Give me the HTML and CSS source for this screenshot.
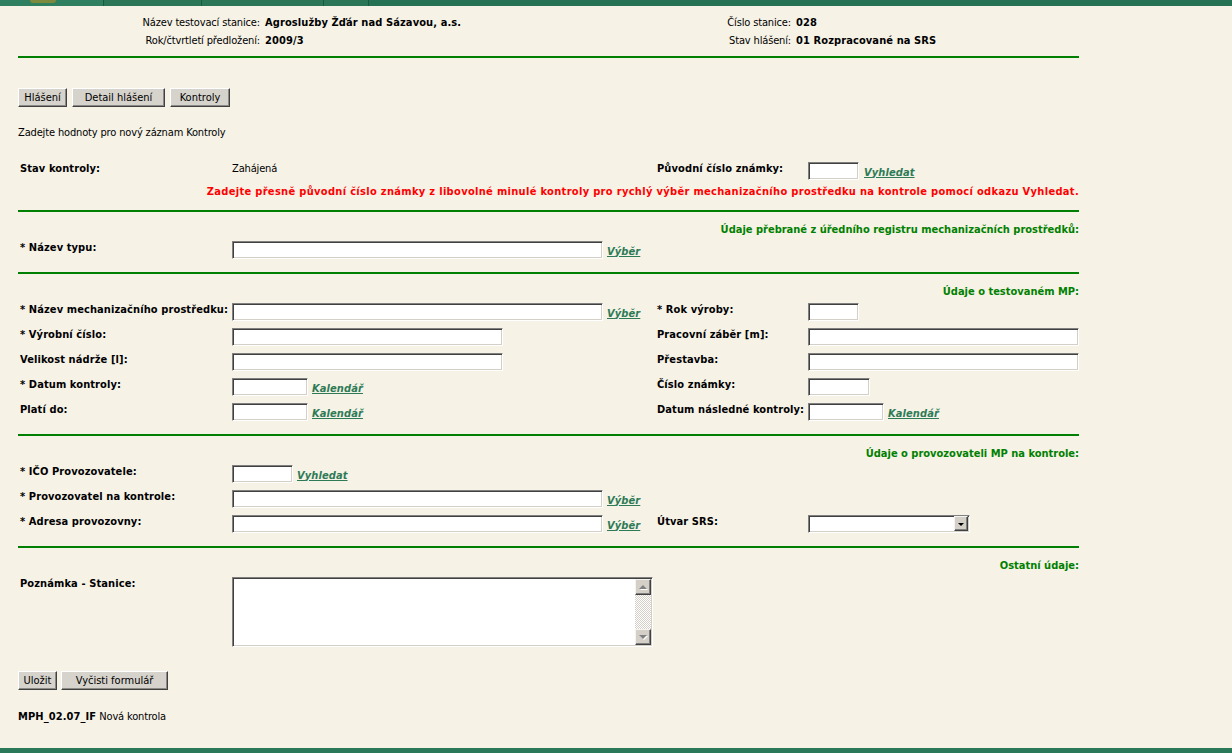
FILE: index.html
```html
<!DOCTYPE html>
<html lang="cs">
<head>
<meta charset="utf-8">
<title>Nová kontrola</title>
<link rel="stylesheet" href="styles.css">
</head>
<body>
<div class="topbar">
  <div class="tb-home"><span class="tb-logo"></span></div>
  <div class="tb-tab tb-w98"></div>
  <div class="tb-tab tb-w122"></div>
  <div class="tb-tab tb-w45"></div>
  <div class="tb-tab tb-rest"></div>
</div>

<div class="hdr-grid">
  <span class="hdr-label">Název testovací stanice:</span><b class="hdr-value">Agroslužby Žďár nad Sázavou, a.s.</b>
  <span class="hdr-label">Číslo stanice:</span><b class="hdr-value">028</b>
  <span class="hdr-label">Rok/čtvrtletí předložení:</span><b class="hdr-value">2009/3</b>
  <span class="hdr-label">Stav hlášení:</span><b class="hdr-value">01 Rozpracované na SRS</b>
</div>

<div class="main">
  <div class="rule rule-top"></div>

  <div class="tabs">
    <button class="btn w49">Hlášení</button>
    <button class="btn w93">Detail hlášení</button>
    <button class="btn w60">Kontroly</button>
  </div>

  <p class="intro">Zadejte hodnoty pro nový záznam Kontroly</p>

  <div class="status">
    <div class="row">
      <div class="lbl">Stav kontroly:</div>
      <div class="ctl">Zahájená</div>
      <div class="lbl">Původní číslo známky:</div>
      <div class="ctl gap5"><input class="inp w51" type="text"><a class="lnk" href="#">Vyhledat</a></div>
    </div>
    <div class="warn">Zadejte přesně původní číslo známky z libovolné minulé kontroly pro rychlý výběr mechanizačního prostředku na kontrole pomocí odkazu Vyhledat.</div>
  </div>
  <div class="rule"></div>

  <div class="sec">
    <div class="sec-title">Údaje přebrané z úředního registru mechanizačních prostředků:</div>
    <div class="rows">
      <div class="row">
        <div class="lbl">* Název typu:</div>
        <div class="ctl"><input class="inp w371" type="text"><a class="lnk" href="#">Výběr</a></div>
      </div>
    </div>
  </div>
  <div class="rule"></div>

  <div class="sec">
    <div class="sec-title">Údaje o testovaném MP:</div>
    <div class="rows">
      <div class="row">
        <div class="lbl">* Název mechanizačního prostředku:</div>
        <div class="ctl"><input class="inp w371" type="text"><a class="lnk" href="#">Výběr</a></div>
        <div class="lbl">* Rok výroby:</div>
        <div class="ctl"><input class="inp w51" type="text"></div>
      </div>
      <div class="row">
        <div class="lbl">* Výrobní číslo:</div>
        <div class="ctl"><input class="inp w271" type="text"></div>
        <div class="lbl">Pracovní záběr [m]:</div>
        <div class="ctl"><input class="inp w271" type="text"></div>
      </div>
      <div class="row">
        <div class="lbl">Velikost nádrže [l]:</div>
        <div class="ctl"><input class="inp w271" type="text"></div>
        <div class="lbl">Přestavba:</div>
        <div class="ctl"><input class="inp w271" type="text"></div>
      </div>
      <div class="row">
        <div class="lbl">* Datum kontroly:</div>
        <div class="ctl"><input class="inp w76" type="text"><a class="lnk" href="#">Kalendář</a></div>
        <div class="lbl">Číslo známky:</div>
        <div class="ctl"><input class="inp w62" type="text"></div>
      </div>
      <div class="row">
        <div class="lbl">Platí do:</div>
        <div class="ctl"><input class="inp w76" type="text"><a class="lnk" href="#">Kalendář</a></div>
        <div class="lbl">Datum následné kontroly:</div>
        <div class="ctl"><input class="inp w76" type="text"><a class="lnk" href="#">Kalendář</a></div>
      </div>
    </div>
  </div>
  <div class="rule"></div>

  <div class="sec">
    <div class="sec-title">Údaje o provozovateli MP na kontrole:</div>
    <div class="rows">
      <div class="row">
        <div class="lbl">* IČO Provozovatele:</div>
        <div class="ctl"><input class="inp w61" type="text"><a class="lnk" href="#">Vyhledat</a></div>
      </div>
      <div class="row">
        <div class="lbl">* Provozovatel na kontrole:</div>
        <div class="ctl"><input class="inp w371" type="text"><a class="lnk" href="#">Výběr</a></div>
      </div>
      <div class="row">
        <div class="lbl">* Adresa provozovny:</div>
        <div class="ctl"><input class="inp w371" type="text"><a class="lnk" href="#">Výběr</a></div>
        <div class="lbl">Útvar SRS:</div>
        <div class="ctl">
          <span class="select">
            <select class="select-field"><option></option></select>
            <span class="select-btn"><span class="tri-down"></span></span>
          </span>
        </div>
      </div>
    </div>
  </div>
  <div class="rule"></div>

  <div class="sec">
    <div class="sec-title">Ostatní údaje:</div>
    <div class="rows">
      <div class="row row-memo">
        <div class="lbl">Poznámka - Stanice:</div>
        <div class="ctl">
          <div class="memo">
            <textarea class="memo-text"></textarea>
            <div class="vscroll">
              <span class="sb-btn"><span class="tri-up-dis"></span></span>
              <span class="sb-track"></span>
              <span class="sb-btn"><span class="tri-down-dis"></span></span>
            </div>
          </div>
        </div>
      </div>
    </div>
  </div>

  <div class="actions">
    <button class="btn w39">Uložit</button>
    <button class="btn w107">Vyčisti formulář</button>
  </div>

  <p class="footer-id"><b>MPH_02.07_IF</b> Nová kontrola</p>
</div>

<div class="bottombar"></div>
</body>
</html>
```

FILE: styles.css
```css
* { box-sizing: border-box; }

html, body { margin: 0; padding: 0; }

body {
  width: 1232px;
  height: 753px;
  overflow: hidden;
  display: flex;
  flex-direction: column;
  background: #f6f2e6;
  color: #000;
  font-family: "DejaVu Sans Condensed", "DejaVu Sans", sans-serif;
  font-stretch: condensed;
  font-size: 11px;
  line-height: 13px;
  letter-spacing: -0.15px;
}

b, .lbl, .lnk, .hdr-value { letter-spacing: 0.1px; }

/* top navigation strip (only its bottom edge is visible) */
.topbar {
  height: 6px;
  display: flex;
  flex: none;
  background: #236d51;
}
.tb-home {
  width: 103px;
  background: #2e8061;
  display: flex;
  align-items: flex-start;
}
.tb-logo {
  width: 26px;
  height: 3px;
  margin-left: 30px;
  border-radius: 0 0 10px 10px;
  background: #7d8a3e;
}
.tb-tab {
  border-left: 1px solid #1a5a40;
  background: #2a7657;
}
.tb-w98 { width: 98px; }
.tb-w122 { width: 122px; }
.tb-w45 { width: 45px; }
.tb-rest { flex: 1; background: #267255; }

/* header info */
.hdr-grid {
  display: grid;
  grid-template-columns: 260px 340px 191px 300px;
  grid-auto-rows: 18px;
  line-height: 18px;
  padding-top: 8px;
  white-space: nowrap;
}
.hdr-label { text-align: right; }
.hdr-value { padding-left: 5px; font-weight: bold; }

/* main column */
.main {
  width: 1079px;
  padding-left: 18px;
}

.rule {
  height: 2px;
  background: #008000;
  margin-top: 13px;
}
.rule-top { margin-top: 6px; }

.tabs, .actions {
  display: flex;
  gap: 5px;
}
.tabs { margin-top: 30px; }
.actions { margin-top: 24px; gap: 4px; }

.btn {
  height: 19px;
  padding: 0;
  font: inherit;
  color: #000;
  background: #d6d3cc;
  border: 1px solid;
  border-color: #fff #404040 #404040 #fff;
  box-shadow: inset -1px -1px 0 #8c8a84;
  text-align: center;
}
.w39 { width: 39px; }
.w49 { width: 49px; }
.w60 { width: 60px; }
.w93 { width: 93px; }
.w107 { width: 107px; }

.intro {
  margin: 19px 0 0;
}

/* grid rows */
.row {
  display: grid;
  grid-template-columns: 212px 425px 151px 273px;
  min-height: 18px;
  align-items: start;
}
.rows {
  display: flex;
  flex-direction: column;
  gap: 7px;
  margin-top: 5px;
}
.lbl {
  padding-left: 2px;
  font-weight: bold;
  white-space: nowrap;
}
.ctl {
  padding-left: 2px;
  display: flex;
  align-items: baseline;
  gap: 4px;
  white-space: nowrap;
}
.gap5 { gap: 5px; }

.status { margin-top: 23px; }
.warn {
  margin-top: 5px;
  color: #ff0000;
  font-weight: bold;
  text-align: right;
  white-space: nowrap;
  letter-spacing: 0.32px;
}
.status + .rule { margin-top: 12px; }

.sec { padding-top: 11px; }
.sec-title {
  color: #008000;
  font-weight: bold;
  text-align: right;
  white-space: nowrap;
  letter-spacing: 0;
}

/* inputs */
.inp {
  height: 18px;
  margin: 0;
  padding: 0 2px;
  font: inherit;
  background: #fff;
  border: 1px solid;
  border-color: #808080 #fff #fff #808080;
  box-shadow: inset 1px 1px 0 #404040, inset -1px -1px 0 #d4d0c8;
  outline: none;
}
.w51 { width: 51px; }
.w61 { width: 61px; }
.w62 { width: 62px; }
.w76 { width: 76px; }
.w271 { width: 271px; }
.w371 { width: 371px; }

.lnk {
  color: #2d7a56;
  font-weight: bold;
  font-style: italic;
  text-decoration: underline;
  position: relative;
  top: 1px;
}

/* fake classic select */
.select {
  display: flex;
  width: 162px;
  height: 18px;
  background: #fff;
  border: 1px solid;
  border-color: #808080 #fff #fff #808080;
  box-shadow: inset 1px 1px 0 #404040, inset -1px -1px 0 #d4d0c8;
  padding: 1px 1px 1px 1px;
}
.select-field {
  flex: 1;
  min-width: 0;
  height: 14px;
  margin: 0;
  padding: 0;
  border: 0;
  background: #fff;
  font: inherit;
  appearance: none;
  -webkit-appearance: none;
  outline: none;
}
.select-btn {
  width: 14px;
  height: 15px;
  margin-top: -1px;
  display: flex;
  align-items: center;
  justify-content: center;
  background: #d4d0c8;
  border: 1px solid;
  border-color: #f4f3ef #404040 #404040 #f4f3ef;
  box-shadow: inset -1px -1px 0 #808080;
}
.tri-down {
  width: 0;
  height: 0;
  border-left: 3px solid transparent;
  border-right: 3px solid transparent;
  border-top: 3px solid #000;
  margin-top: 1px;
}

/* textarea with classic scrollbar */
.row-memo { min-height: 70px; }
.memo {
  display: flex;
  width: 421px;
  height: 70px;
  background: #fff;
  border: 1px solid;
  border-color: #808080 #fff #fff #808080;
  box-shadow: inset 1px 1px 0 #404040, inset -1px -1px 0 #d4d0c8;
  padding: 1px;
}
.memo-text {
  flex: 1;
  height: 100%;
  margin: 0;
  padding: 1px 2px;
  border: 0;
  resize: none;
  font: inherit;
  background: #fff;
  outline: none;
}
.vscroll {
  width: 16px;
  display: flex;
  flex-direction: column;
}
.sb-btn {
  height: 16px;
  flex: none;
  display: flex;
  align-items: center;
  justify-content: center;
  background: #d4d0c8;
  border: 1px solid;
  border-color: #f4f3ef #404040 #404040 #f4f3ef;
  box-shadow: inset -1px -1px 0 #808080;
}
.sb-track {
  flex: 1;
  background: repeating-conic-gradient(#ffffff 0 25%, #d4d0c8 0 50%) 0 0 / 2px 2px;
}
.tri-up-dis, .tri-down-dis {
  width: 0;
  height: 0;
  border-left: 4px solid transparent;
  border-right: 4px solid transparent;
}
.tri-up-dis {
  border-bottom: 4px solid #808080;
  filter: drop-shadow(1px 1px 0 #fff);
}
.tri-down-dis {
  border-top: 4px solid #808080;
  filter: drop-shadow(1px 1px 0 #fff);
}

.footer-id {
  margin: 20px 0 0;
}

.bottombar {
  margin-top: auto;
  height: 5px;
  flex: none;
  background: #2a7a5a;
}
```
